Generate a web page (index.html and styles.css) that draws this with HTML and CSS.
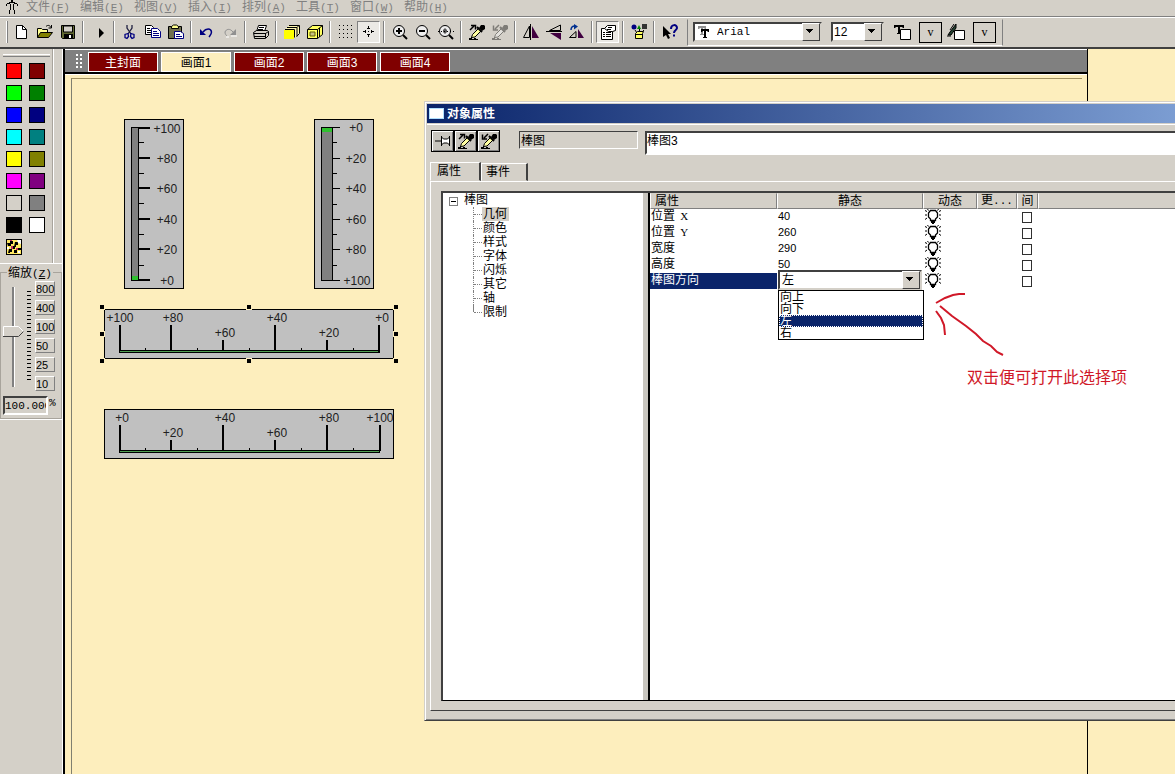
FILE: index.html
```html
<!DOCTYPE html>
<html lang="zh-CN">
<head>
  <meta charset="UTF-8">
  <meta name="viewport" content="width=device-width, initial-scale=1.0">
  <title>对象属性</title>
  <link rel="stylesheet" href="styles.css">
</head>
<body>
  <svg class="defs" aria-hidden="true">
    <symbol id="bulb" viewBox="0 0 16 16">
      <path d="M5.500 11.500v-1.500l-2-2v-4l2-2.500h5l2 2.500v4l-2 2v1.500z" fill="#fff" stroke="#000" stroke-width="1.300"/>
      <path d="M6 12h4v2h-1v1h-2v-1h-1z" fill="#000"/>
      <path d="M0 1.500l2 1M0 6h2M0 10.500l2-1.500M16 1.500l-2 1M16 6h-2M16 10.500l-2-1.500M2.500 0l1 1.500M13.500 0l-1 1.500" stroke="#000"/>
    </symbol>
    <symbol id="dropper" viewBox="0 0 16 16">
      <path d="M2.500 13.500l1-3 6-6 2.500 2.500-6 6z" fill="#ffffa0" stroke="#000"/>
      <path d="M8 3l5 5" stroke="#000" stroke-width="2"/>
      <path d="M10 4l2-3h3l1 1v3l-3 2z" fill="#000"/>
      <path d="M0 14h2v-1h1v2h2v-1h2v1h2v1h-9z" fill="#000"/>
    </symbol>
    <symbol id="get" viewBox="0 0 16 16">
      <use href="#dropper"/>
      <path d="M1 6l4-4M2 1.500h4.500v4" fill="none" stroke="#000" stroke-width="1.500"/>
    </symbol>
    <symbol id="put" viewBox="0 0 16 16">
      <use href="#dropper"/>
      <path d="M7 1l-4 4M1.500 1.500v4.500h4.500" fill="none" stroke="#000" stroke-width="1.500"/>
    </symbol>
  </svg>

  <nav class="menubar">
    <svg class="app-icon" viewBox="0 0 14 14"><path d="M6 0h2v2h-2zM4 2h6v1h-6zM2 3h3v1h-3zM9 3h3v1h-3zM1 4h1v2h-1zM12 4h1v2h-1zM5 4h1v6h-1zM8 4h1v6h-1zM4 10h1v4h-1zM9 10h1v4h-1z"/></svg>
    <a href="#">文件<span class="key">(<u>F</u>)</span></a>
    <a href="#">编辑<span class="key">(<u>E</u>)</span></a>
    <a href="#">视图<span class="key">(<u>V</u>)</span></a>
    <a href="#">插入<span class="key">(<u>I</u>)</span></a>
    <a href="#">排列<span class="key">(<u>A</u>)</span></a>
    <a href="#">工具<span class="key">(<u>T</u>)</span></a>
    <a href="#">窗口<span class="key">(<u>W</u>)</span></a>
    <a href="#">帮助<span class="key">(<u>H</u>)</span></a>
  </nav>

  <div class="toolbar">
    <span class="grip"></span>
    <button class="tool" aria-label="新建"><svg viewBox="0 0 16 16"><path d="M2.500 1.500h6l4 4v9h-10z" fill="#fff" stroke="#000"/><path d="M8.500 1.500v4h4" fill="none" stroke="#000"/></svg></button>
    <button class="tool" aria-label="打开"><svg viewBox="0 0 16 16"><path d="M.5 13.500v-9h4l1 1h5v3" fill="#ffff90" stroke="#000"/><path d="M.5 13.500l3-5h12l-4 5z" fill="#808000" stroke="#000"/><path d="M9 2.500c2-2 4-1 5 1M14.500 1v3h-3" fill="none" stroke="#000"/></svg></button>
    <button class="tool" aria-label="保存"><svg viewBox="0 0 16 16"><path d="M1.500 1.500h13v13h-12l-1-1z" fill="#606830" stroke="#000"/><path d="M3.500 2h9v6h-9z" fill="#d4d0c8" stroke="#000"/><path d="M4 10h9v5h-9z" fill="#000"/><path d="M9 11h2v3h-2z" fill="#fff"/></svg></button>
    <span class="sep"></span>
    <button class="tool" aria-label="运行"><svg viewBox="0 0 16 16"><path d="M8 4v10l5-5z"/></svg></button>
    <span class="sep"></span>
    <button class="tool" aria-label="剪切"><svg viewBox="0 0 16 16"><path d="M5 1v3l4 6M10 1v3l-4 6" fill="none" stroke="#202040" stroke-width="1.300"/><path d="M6 9.500l-3 1v3l2 1 1.500-2zM9 9.500l3 1v3l-2 1-1.500-2z" fill="none" stroke="#000080" stroke-width="1.300"/></svg></button>
    <button class="tool" aria-label="复制"><svg viewBox="0 0 16 16"><path d="M.5 1.500h6l2 2v7h-8z" fill="#fff" stroke="#000"/><path d="M2 4.500h3M2 6.500h4M2 8.500h4" stroke="#000"/><path d="M6.500 4.500h6l3 3v6h-9z" fill="#fff" stroke="#000080"/><path d="M8 7.500h4M8 9.500h6M8 11.500h6" stroke="#000080"/></svg></button>
    <button class="tool" aria-label="粘贴"><svg viewBox="0 0 16 16"><path d="M.5 2.500h13v12h-13z" fill="#707050" stroke="#000"/><path d="M3.500 4.500v-2l2-1.500h3l2 1.500v2z" fill="#ffff90" stroke="#000"/><path d="M6.500 7.500h6l3 2v5h-9z" fill="#fff" stroke="#000080"/><path d="M8 10.500h4M8 12.500h6" stroke="#000080"/></svg></button>
    <span class="sep"></span>
    <button class="tool" aria-label="撤消"><svg viewBox="0 0 16 16"><path d="M1 5v6h6z" fill="#000080"/><path d="M4 8c3-4 8-4 8.500 0 0 2-1 3-2.500 5" fill="none" stroke="#000080" stroke-width="1.500"/></svg></button>
    <button class="tool" aria-label="重做"><svg viewBox="0 0 16 16"><path d="M14 5v6h-6z" fill="#909090"/><path d="M11 8c-3-4-7-3-8 0 0 2 1 3 2 4" fill="none" stroke="#909090"/><path d="M9 12h6M4 13h3" stroke="#fff"/></svg></button>
    <span class="sep"></span>
    <button class="tool" aria-label="打印"><svg viewBox="0 0 16 16"><path d="M5.500 1.500h8l-2 6h-8z" fill="#fff" stroke="#000"/><path d="M6 3.500h5M5 5.500h5" stroke="#000"/><path d="M.5 8.500l3-2h11l1 1v4l-3 3h-11z" fill="#d4d0c8" stroke="#000"/><path d="M1 9.500h11M1 12.500h11M12.500 9v5M12.500 9.500l3-2" stroke="#000"/></svg></button>
    <span class="sep"></span>
    <button class="tool" aria-label="置于最前"><svg viewBox="0 0 16 16"><path d="M5 1.500h10.500v8l-3.500 4-11-8z" fill="#fff8b0"/><path d="M5 1.500h10.500v8l-3 3M3 3.500h10v9M13 3.500l2-2M1 5.500h9.500v8" fill="none" stroke="#000"/><path d="M0 6h10v9h-10z" fill="#ff0"/></svg></button>
    <button class="tool" aria-label="置于最后"><svg viewBox="0 0 16 16"><path d="M.5 5.500l5-4h10v9l-5 4h-10z" fill="#ffff60" stroke="#000"/><path d="M.5 5.500h10v9M10.500 5.500l5-4M12.500 4v9" fill="none" stroke="#000"/><path d="M3 8h5v4h-5z" fill="#c8c080" stroke="#606000"/></svg></button>
    <span class="sep"></span>
    <button class="tool" aria-label="网格"><svg viewBox="0 0 16 16"><path d="M1 1.500h15M1 5.500h15M1 9.500h15M1 13.500h15" stroke="#000" stroke-dasharray="1 3"/></svg></button>
    <button class="tool pressed" aria-label="对齐网格"><svg viewBox="0 0 16 16"><path d="M7.500 2v3M7.500 10v3M2 7.500h3M10 7.500h3" stroke="#000"/><path d="M7 7h1v1h-1zM6 4h3v1h-3zM6 10h3v1h-3zM4 6h1v3h-1zM10 6h1v3h-1z"/></svg></button>
    <span class="sep"></span>
    <button class="tool" aria-label="放大"><svg viewBox="0 0 16 16"><circle cx="7" cy="7" r="5.500" fill="#eee" stroke="#000"/><path d="M4 7h6M7 4v6" stroke="#000" stroke-width="2"/><path d="M11 11l4 4" stroke="#000" stroke-width="2"/></svg></button>
    <button class="tool" aria-label="缩小"><svg viewBox="0 0 16 16"><circle cx="7" cy="7" r="5.500" fill="#eee" stroke="#000"/><path d="M4 7h6" stroke="#000" stroke-width="2"/><path d="M11 11l4 4" stroke="#000" stroke-width="2"/></svg></button>
    <button class="tool" aria-label="缩放区域"><svg viewBox="0 0 16 16"><circle cx="7" cy="7" r="5.500" fill="#eee" stroke="#000"/><path d="M5 6l2-2 2 2v2l-2 2-2-2z" fill="#555"/><path d="M0 7.500h16" stroke="#000" stroke-dasharray="1 2"/><path d="M11 11l4 4" stroke="#000" stroke-width="2"/></svg></button>
    <span class="sep"></span>
    <button class="tool" aria-label="复制属性"><svg viewBox="0 0 16 16"><use href="#get"/></svg></button>
    <button class="tool disabled" aria-label="分配属性"><svg viewBox="0 0 16 16"><use href="#put"/></svg></button>
    <span class="sep"></span>
    <button class="tool" aria-label="水平镜像"><svg viewBox="0 0 16 16"><path d="M6.500 2v11.500h-6z" fill="#d4d0c8" stroke="#000"/><path d="M9 2v12h7z" fill="#400040"/><path d="M7.500 0v16" stroke="#000"/></svg></button>
    <button class="tool" aria-label="垂直镜像"><svg viewBox="0 0 16 16"><path d="M14.500 1v5.500h-11z" fill="#d4d0c8" stroke="#000"/><path d="M15 9v7l-11-7z" fill="#400040"/><path d="M0 7.500h16" stroke="#000"/></svg></button>
    <button class="tool" aria-label="旋转"><svg viewBox="0 0 16 16"><path d="M7 7.500v6h-6.500z" fill="#d4d0c8" stroke="#000"/><path d="M9 5v9h6z" fill="#400040"/><path d="M2 6c0-3 2-4 4-4" fill="none" stroke="#003090" stroke-width="1.500"/><path d="M5 0l4 2.500-4 3z" fill="#003090"/></svg></button>
    <span class="sep"></span>
    <button class="tool pressed" aria-label="属性"><svg viewBox="0 0 16 16"><path d="M1.500 4.500h11v11h-11z" fill="#fff" stroke="#000"/><path d="M3 8.500h2M6 8.500h5M3 10.500h2M6 10.500h5M3 12.500h2M6 12.500h5" stroke="#000"/><path d="M4.500 4.500l3-3h8v5l-3 1h-4z" fill="#fff" stroke="#000"/><path d="M8 3.500h4M7 5.500h4" stroke="#000"/></svg></button>
    <span class="sep"></span>
    <button class="tool" aria-label="库"><svg viewBox="0 0 16 16"><circle cx="3" cy="3" r="2.500" fill="#000080"/><path d="M6 5l2-4 2 4z" fill="#080"/><path d="M11 0h5v5h-5z" fill="#333"/><path d="M4 6l2 3M8.500 5v2M13 6l-2 2" stroke="#000"/><path d="M4.500 9.500l2-2h6l-1 2v5h-7z" fill="#ffff60" stroke="#000"/><path d="M5 10.500h6" stroke="#000"/></svg></button>
    <span class="sep"></span>
    <button class="tool" aria-label="帮助"><svg viewBox="0 0 16 16"><path d="M1 2v11l3-2 2 4 2-1-2-4h3z"/><path d="M9 5c0-5 6-5 6-1 0 2-3 2-3 5M12 10.500v2" fill="none" stroke="#000080" stroke-width="2"/></svg></button>

    <div class="fontbar">
      <label class="combo font-name">
        <svg viewBox="0 0 16 16"><path d="M1 2h8v3h-1l-1-1h-1v6h1v1h-4v-1h1v-6h-1l-1 1h-1z" fill="#909090"/><path d="M4 5h8v3h-1l-1-1h-1v6h1v1h-4v-1h1v-6h-1l-1 1h-1z" fill="#000"/></svg>
        <select aria-label="字体"><option>Arial</option></select>
      </label>
      <label class="combo font-size">
        <select aria-label="字号"><option>12</option></select>
      </label>
      <button class="tool color" aria-label="字体颜色"><svg viewBox="0 0 18 16"><path d="M1 1h10v3h-1l-1-1h-2v6h1v1h-4v-1h1v-6h-2l-1 1h-1z" fill="#000"/><path d="M7.500 5.500h10v10h-10z" fill="#fff" stroke="#000"/></svg></button>
      <button class="drop">v</button>
      <button class="tool color" aria-label="线颜色"><svg viewBox="0 0 18 16"><path d="M9 0l-6 8-2 3h3l5-7zM7 0l-4 6" fill="#204030" stroke="#000"/><path d="M0 12h4" stroke="#000"/><path d="M7.500 6.500h10v9h-10z" fill="#fff" stroke="#000"/></svg></button>
      <button class="drop">v</button>
    </div>
  </div>

  <div class="body">
    <aside class="side">
      <div class="palette">
        <span class="palette-grip"></span>
        <div class="swatches">
          <button class="swatch red" aria-label="红"></button><button class="swatch maroon" aria-label="深红"></button>
          <button class="swatch lime" aria-label="绿"></button><button class="swatch green" aria-label="深绿"></button>
          <button class="swatch blue" aria-label="蓝"></button><button class="swatch navy" aria-label="深蓝"></button>
          <button class="swatch cyan" aria-label="青"></button><button class="swatch teal" aria-label="深青"></button>
          <button class="swatch yellow" aria-label="黄"></button><button class="swatch olive" aria-label="深黄"></button>
          <button class="swatch magenta" aria-label="紫"></button><button class="swatch purple" aria-label="深紫"></button>
          <button class="swatch silver" aria-label="浅灰"></button><button class="swatch gray" aria-label="灰"></button>
          <button class="swatch black" aria-label="黑"></button><button class="swatch white" aria-label="白"></button>
          <button class="swatch more" aria-label="更多颜色"><svg viewBox="0 0 14 14"><path d="M0 0h14v14h-14z" fill="#ffe860"/><path d="M0 3h3v-2h3v3h-2v2h-3zM8 2h3v3h-2v2h-2zM2 9h3v3h-2v1h-2zM6 6h2v3h-2zM7 10h3v3h-3zM11 8h3v2h-3z" fill="#000"/><path d="M4 6h2v3h-2zM9 8h2v2h-2zM3 0h2v1h-2z" fill="#c03060"/><path d="M10 0l4 0v4l-3-1zM0 7h2v2h-2zM11 11h2v2h-2z" fill="#fff"/></svg></button>
        </div>
      </div>
      <fieldset class="zoom">
        <legend>缩放<span class="key">(<u>Z</u>)</span></legend>
        <div class="zoom-row">
          <input class="zoom-slider" type="range" min="0" max="100" value="56" aria-label="缩放">
          <span class="ticks"></span>
          <div class="zoom-steps">
            <button>800</button>
            <button>400</button>
            <button>100</button>
            <button>50</button>
            <button>25</button>
            <button>10</button>
          </div>
        </div>
        <label class="zoom-value"><input type="text" value="100.000">%</label>
      </fieldset>
    </aside>

    <main class="workspace">
      <div class="page">
        <div class="tabstrip">
          <span class="dots"></span>
          <button class="screen">主封面</button>
          <button class="screen active">画面1</button>
          <button class="screen">画面2</button>
          <button class="screen">画面3</button>
          <button class="screen">画面4</button>
        </div>
        <div class="sheet"></div>
      </div>

      <svg class="gauge bar-up" viewBox="0 0 60 170">
        <rect class="face" x=".5" y=".5" width="59" height="169"/>
        <rect class="tube" x="7.500" y="8.500" width="7" height="153"/>
        <rect class="level" x="8" y="157" width="6" height="4"/>
        <path class="major" d="M15 9h11M15 39h11M15 69h11M15 100h11M15 130h11M15 161h11"/>
        <path class="minor" d="M15 23.500h5M15 54.500h5M15 84.500h5M15 115.500h5M15 146.500h5"/>
        <text x="43" y="14">+100</text>
        <text x="43" y="44">+80</text>
        <text x="43" y="74">+60</text>
        <text x="43" y="105">+40</text>
        <text x="43" y="135">+20</text>
        <text x="43" y="166">+0</text>
      </svg>

      <svg class="gauge bar-down" viewBox="0 0 60 170">
        <rect class="face" x=".5" y=".5" width="59" height="169"/>
        <rect class="tube" x="7.500" y="8.500" width="11" height="153"/>
        <rect class="level" x="8" y="9" width="10" height="4"/>
        <path class="minor" d="M18 8.500h8M18 39.500h8M18 69.500h8M18 100.500h8M18 130.500h8M18 161.500h8"/>
        <path class="minor" d="M19 23.500h4M19 54.500h4M19 85.500h4M19 115.500h4M19 146.500h4"/>
        <text x="42" y="13">+0</text>
        <text x="42" y="44">+20</text>
        <text x="42" y="74">+40</text>
        <text x="42" y="105">+60</text>
        <text x="42" y="135">+80</text>
        <text x="43" y="166">+100</text>
      </svg>

      <svg class="gauge bar-left" viewBox="-4 -4 298 58">
        <rect class="face" x=".5" y=".5" width="289" height="49"/>
        <rect class="thin" x="15.500" y="41.500" width="259" height="2"/>
        <path class="major" d="M16 16v26M67 16v26M119 31v11M171 16v26M223 31v11M275 16v28"/>
        <path class="minor" d="M41.500 39v3M93.500 39v3M145.500 39v3M197.500 39v3M249.500 39v3"/>
        <text x="16" y="13">+100</text>
        <text x="69" y="13">+80</text>
        <text x="121" y="28">+60</text>
        <text x="173" y="13">+40</text>
        <text x="225" y="28">+20</text>
        <text x="278" y="13">+0</text>
        <g class="handles">
          <rect x="-4.500" y="-4.500" width="5" height="5"/><rect x="142.500" y="-4.500" width="5" height="5"/><rect x="289.500" y="-4.500" width="5" height="5"/>
          <rect x="-4.500" y="22.500" width="5" height="5"/><rect x="289.500" y="22.500" width="5" height="5"/>
          <rect x="-4.500" y="49.500" width="5" height="5"/><rect x="142.500" y="49.500" width="5" height="5"/><rect x="289.500" y="49.500" width="5" height="5"/>
        </g>
      </svg>

      <svg class="gauge bar-right" viewBox="0 0 290 50">
        <rect class="face" x=".5" y=".5" width="289" height="49"/>
        <rect class="thin" x="15.500" y="41.500" width="260" height="2"/>
        <path class="major" d="M16 16v26M67 31v11M119 16v26M171 31v11M223 16v26M276 16v26"/>
        <path class="minor" d="M41.500 39v3M93.500 39v3M145.500 39v3M197.500 39v3M249.500 39v3"/>
        <text x="18" y="13">+0</text>
        <text x="69" y="28">+20</text>
        <text x="121" y="13">+40</text>
        <text x="173" y="28">+60</text>
        <text x="225" y="13">+80</text>
        <text x="276" y="13">+100</text>
      </svg>

      <section class="dialog">
        <h1 class="titlebar"><span class="title-icon"></span>对象属性</h1>
        <div class="dialog-tools">
          <div class="tool-group">
            <button aria-label="固定"><svg viewBox="0 0 16 16"><path d="M0 8h6M6.500 3v10M14.500 3v10" stroke="#000"/><path d="M6.500 4l2 2h4l2-2v8l-2-2h-4l-2 2z" fill="#fff" stroke="#000"/></svg></button>
            <button aria-label="复制属性"><svg viewBox="0 0 16 16"><use href="#get"/></svg></button>
            <button aria-label="分配属性"><svg viewBox="0 0 16 16"><use href="#put"/></svg></button>
          </div>
          <input class="kind" type="text" value="棒图" readonly aria-label="类型">
          <input class="name" type="text" value="棒图3" aria-label="名称">
        </div>
        <div class="tabs">
          <button class="tab active">属性</button>
          <button class="tab">事件</button>
        </div>
        <div class="tab-page">
          <div class="panes">
            <div class="tree">
              <div class="root"><button class="toggle" aria-label="折叠"></button>棒图</div>
              <ul>
                <li><span class="selected">几何</span></li>
                <li><span>颜色</span></li>
                <li><span>样式</span></li>
                <li><span>字体</span></li>
                <li><span>闪烁</span></li>
                <li><span>其它</span></li>
                <li><span>轴</span></li>
                <li><span>限制</span></li>
              </ul>
            </div>
            <div class="props">
              <table>
                <colgroup><col class="c-name"><col class="c-static"><col class="c-dyn"><col class="c-upd"><col class="c-ind"><col></colgroup>
                <thead>
                  <tr><th>属性</th><th>静态</th><th>动态</th><th>更<span class="key">...</span></th><th>间</th><th></th></tr>
                </thead>
                <tbody>
                  <tr><td>位置 <span class="axis">X</span></td><td>40</td><td><svg class="bulb"><use href="#bulb"/></svg></td><td></td><td><input type="checkbox" aria-label="位置 X"></td><td></td></tr>
                  <tr><td>位置 <span class="axis">Y</span></td><td>260</td><td><svg class="bulb"><use href="#bulb"/></svg></td><td></td><td><input type="checkbox" aria-label="位置 Y"></td><td></td></tr>
                  <tr><td>宽度</td><td>290</td><td><svg class="bulb"><use href="#bulb"/></svg></td><td></td><td><input type="checkbox" aria-label="宽度"></td><td></td></tr>
                  <tr><td>高度</td><td>50</td><td><svg class="bulb"><use href="#bulb"/></svg></td><td></td><td><input type="checkbox" aria-label="高度"></td><td></td></tr>
                  <tr class="current">
                    <td><label for="direction">棒图方向</label></td>
                    <td>
                      <div class="editor">
                        <div class="combo">
                          <select id="direction"><option>向上</option><option>向下</option><option selected>左</option><option>右</option></select>
                        </div>
                        <ul class="options" role="listbox">
                          <li role="option">向上</li>
                          <li role="option">向下</li>
                          <li role="option" aria-selected="true">左</li>
                          <li role="option">右</li>
                        </ul>
                      </div>
                    </td>
                    <td><svg class="bulb"><use href="#bulb"/></svg></td><td></td><td><input type="checkbox" aria-label="棒图方向"></td><td></td>
                  </tr>
                </tbody>
              </table>
            </div>
          </div>
        </div>
      </section>

      <div class="note">
        <svg viewBox="0 0 80 70"><path d="M6 11l9-5 8-3 6-1 6 0M10 14l12 10 14 10 10 8 7 7 8 5 6 6 6 3M6 19l5 7 3 7 1 10"/></svg>
        <p>双击便可打开此选择项</p>
      </div>
    </main>
  </div>
</body>
</html>
```
FILE: styles.css
```css
:root {
  --face: #d4d0c8;
  --light: #fff;
  --shadow: #808080;
  --dark: #404040;
  --paper: #fdeebd;
  --navy: #0a246a;
  --maroon: #800000;
}
* {
  box-sizing: border-box;
}
html, body {
  height: 100%;
  margin: 0;
}
body {
  display: flex;
  flex-direction: column;
  overflow: hidden;
  background: var(--face);
  color: #000;
  font-family: "Liberation Sans", "Noto Sans CJK SC", sans-serif;
  font-size: 12px;
  line-height: 14px;
}
button, input, select {
  margin: 0;
  padding: 0;
  border: 0;
  border-radius: 0;
  color: inherit;
  font: inherit;
}
svg {
  display: block;
}
.defs {
  position: absolute;
  width: 0;
  height: 0;
}
.key {
  font-family: "Liberation Mono", monospace;
  font-size: 11px;
}

/* Menu bar */
.menubar {
  display: flex;
  flex: none;
  height: 17px;
  padding-left: 5px;
  border-bottom: 1px solid var(--shadow);
}
.menubar a {
  width: 54px;
  color: var(--shadow);
  text-decoration: none;
  line-height: 15px;
  white-space: nowrap;
}
.app-icon {
  width: 14px;
  height: 14px;
  margin-right: 7px;
}

/* Toolbar */
.toolbar {
  display: flex;
  align-items: center;
  height: 32px;
  flex: none;
  padding: 0 0 1px 6px;
  border-top: 1px solid var(--light);
  border-bottom: 2px solid var(--dark);
}
.grip {
  width: 2px;
  height: 22px;
  margin-right: 2px;
  border-left: 1px solid var(--light);
  border-right: 1px solid var(--shadow);
}
.tool {
  display: flex;
  align-items: center;
  justify-content: center;
  flex: none;
  width: 23px;
  height: 22px;
  background: none;
}
.tool svg {
  width: 16px;
  height: 16px;
}
.tool.pressed {
  background: #ebe9e5;
  border: 1px solid;
  border-color: var(--shadow) var(--light) var(--light) var(--shadow);
}
.tool.disabled svg {
  filter: grayscale(1);
  opacity: 0.4;
}
.sep {
  flex: none;
  width: 2px;
  height: 22px;
  margin: 0 3px;
  border-left: 1px solid var(--shadow);
  border-right: 1px solid var(--light);
}
.fontbar {
  display: flex;
  align-items: center;
  flex: none;
  height: 27px;
  margin-left: 6px;
  padding: 0 6px 0 5px;
  border: 1px solid;
  border-color: var(--face) var(--shadow) var(--light) var(--shadow);
}
.combo {
  position: relative;
  display: flex;
  align-items: center;
  height: 20px;
  background: #fff;
  border: 2px solid;
  border-color: var(--dark) var(--face) var(--face) var(--dark);
}
.combo select {
  flex: 1;
  min-width: 0;
  height: 100%;
  padding-left: 2px;
  appearance: none;
  background: none;
  outline: 0;
}
.combo::after {
  content: '';
  width: 16px;
  height: 16px;
  flex: none;
  background: linear-gradient(#000, #000) 3px 5px / 7px 1px no-repeat,
    linear-gradient(#000, #000) 4px 6px / 5px 1px no-repeat,
    linear-gradient(#000, #000) 5px 7px / 3px 1px no-repeat,
    linear-gradient(#000, #000) 6px 8px / 1px 1px no-repeat,
    var(--face);
  border: 1px solid;
  border-color: var(--light) var(--dark) var(--dark) var(--light);
  pointer-events: none;
}
.font-name {
  width: 129px;
  margin-right: 9px;
}
.font-name svg {
  width: 16px;
  height: 16px;
  margin: 0 2px;
}
.font-name select {
  font-family: "Liberation Mono", monospace;
  font-size: 11px;
}
.font-size {
  width: 53px;
  margin-right: 6px;
}
.font-size select {
  padding-left: 1px;
}
.tool.color svg {
  width: 18px;
}
.drop {
  width: 23px;
  height: 21px;
  margin-left: 6px;
  border: 1px solid #000;
  background: var(--face);
  font-family: "Liberation Serif", serif;
}
.drop + .tool {
  margin-left: 2px;
}

/* Left dock */
.body {
  display: flex;
  flex: 1;
  min-height: 0;
}
.side {
  flex: none;
  width: 63px;
  border-right: 1px solid var(--light);
}
.palette {
  width: 54px;
  height: 215px;
  padding: 5px 6px 0;
  border-right: 1px solid var(--light);
  box-shadow: inset -1px 0 0 #a8a49c;
}
.palette-grip {
  display: block;
  height: 3px;
  margin: 0 -3px 6px;
  border-top: 1px solid var(--light);
  border-bottom: 1px solid var(--shadow);
}
.swatches {
  display: grid;
  grid-template-columns: 16px 16px;
  gap: 6px 7px;
}
.swatch {
  height: 16px;
  border: 1px solid #000;
}
.red { background: #f00; }
.maroon { background: #800000; }
.lime { background: #0f0; }
.green { background: #008000; }
.blue { background: #00f; }
.navy { background: #000080; }
.cyan { background: #0ff; }
.teal { background: #008080; }
.yellow { background: #ff0; }
.olive { background: #808000; }
.magenta { background: #f0f; }
.purple { background: #800080; }
.silver { background: var(--face); }
.gray { background: #808080; }
.black { background: #000; }
.white { background: #fff; }
.zoom {
  min-width: 0;
  margin: 0;
  padding: 1px 2px 3px 1px;
  border: 1px solid #a8a49c;
  outline: 1px solid var(--light);
}
.zoom legend {
  height: 16px;
  margin-left: 5px;
  padding: 0 1px;
  line-height: 18px;
  white-space: nowrap;
  background: var(--face);
}
.zoom-row {
  display: flex;
}
.zoom-slider {
  appearance: none;
  width: 23px;
  height: 100px;
  margin-top: 6px;
  writing-mode: vertical-lr;
  direction: rtl;
  background: linear-gradient(90deg, var(--shadow) 2px, var(--light) 2px) 10px 0 / 3px 100% no-repeat;
}
.zoom-slider::-webkit-slider-thumb {
  appearance: none;
  width: 21px;
  height: 11px;
  background: url("data:image/svg+xml,%3Csvg xmlns='http://www.w3.org/2000/svg' viewBox='0 0 21 11'%3E%3Cpath d='M.5 .5h15l5 5-5 5h-15z' fill='%23d4d0c8' stroke='%23fff'/%3E%3Cpath d='M0 10.500h15.500l5-5' fill='none' stroke='%23404040'/%3E%3C/svg%3E");
}
.ticks {
  width: 4px;
  height: 92px;
  margin: 10px 4px 0 2px;
  background: repeating-linear-gradient(#000 0 1px, transparent 1px 4px);
}
.zoom-steps {
  display: flex;
  flex-direction: column;
  gap: 4px;
}
.zoom-steps button {
  width: 20px;
  height: 15px;
  border: 1px solid;
  border-color: var(--light) var(--shadow) var(--shadow) var(--light);
  background: var(--face);
  font-size: 11px;
  line-height: 12px;
  text-align: left;
}
.zoom-value {
  display: flex;
  gap: 1px;
  margin-top: 5px;
  font-family: "Liberation Mono", monospace;
  font-size: 11px;
}
.zoom-value input {
  width: 45px;
  height: 19px;
  margin-left: 1px;
  border: 2px solid;
  border-color: var(--dark) var(--light) var(--light) var(--dark);
  background: var(--face);
}

/* Drawing area */
.workspace {
  position: relative;
  flex: 1;
  min-width: 0;
  border-left: 2px solid #000;
  background: var(--paper);
  overflow: hidden;
}
.page {
  display: flex;
  flex-direction: column;
  height: 100%;
  margin-right: 87px;
  border-right: 1px solid #000;
}
.tabstrip {
  display: flex;
  align-items: flex-end;
  gap: 3px;
  height: 25px;
  padding-left: 10px;
  border-top: 1px solid var(--light);
  border-bottom: 2px solid #000;
  background: #808080;
  box-shadow: 0 1px 0 var(--light);
}
.dots {
  width: 10px;
  height: 16px;
  margin-bottom: 3px;
  background: radial-gradient(circle, #fff 1px, transparent 1px) 0 0 / 4px 4px;
  clip-path: inset(0 2px 0 0);
}
.screen {
  width: 70px;
  height: 20px;
  padding-top: 2px;
  border: 1px solid var(--light);
  background: var(--maroon);
  color: #fff;
}
.screen.active {
  background: var(--paper);
  color: #000;
}
.sheet {
  flex: 1;
  margin: 4px 5px 0 6px;
  border-top: 1px solid #a09060;
  border-left: 1px solid #808070;
}

/* Bar graphs placed on the page */
.gauge {
  position: absolute;
  overflow: visible;
  shape-rendering: crispEdges;
}
.gauge text {
  font-size: 12px;
  fill: #202020;
  text-anchor: middle;
}
.bar-up { left: 59px; top: 70px; width: 60px; height: 170px; }
.bar-down { left: 249px; top: 70px; width: 60px; height: 170px; }
.bar-left { left: 35px; top: 256px; width: 298px; height: 58px; }
.bar-right { left: 39px; top: 360px; width: 290px; height: 50px; }
.face { fill: #c0c0c0; stroke: #000; }
.tube { fill: #808080; stroke: #000; }
.level { fill: #30c030; }
.thin { fill: #50a050; stroke: #000; }
.major { stroke: #000; stroke-width: 2; }
.minor { stroke: #000; stroke-width: 1; }
.handles rect { fill: #000; stroke: var(--paper); }

/* Object properties window */
.dialog {
  position: absolute;
  top: 52px;
  right: -60px;
  bottom: 53px;
  left: 359px;
  display: flex;
  flex-direction: column;
  padding: 2px;
  border: 1px solid;
  border-color: var(--face) var(--dark) var(--dark) var(--face);
  background: var(--face);
  box-shadow: inset 1px 1px 0 var(--light), inset 0 -1px 0 var(--shadow);
}
.titlebar {
  display: flex;
  align-items: center;
  gap: 3px;
  height: 19px;
  margin: 0;
  padding-left: 2px;
  background: linear-gradient(90deg, var(--navy), #84a6da);
  color: #fff;
  font-size: 12px;
}
.title-icon {
  width: 15px;
  height: 11px;
  border: 1px solid #b0e0ff;
  background: #fff;
}
.dialog-tools {
  display: flex;
  align-items: flex-start;
  margin-top: 1px;
  padding: 5px 0 0 4px;
  border-top: 1px solid var(--light);
}
.tool-group {
  display: flex;
  margin-right: 19px;
}
.tool-group button {
  display: flex;
  align-items: center;
  justify-content: center;
  width: 23px;
  height: 22px;
  border: 1px solid #000;
  background: #c8c5be;
  box-shadow: inset 1px 1px 0 var(--light), inset -1px -1px 0 var(--shadow);
}
.tool-group svg {
  width: 16px;
  height: 16px;
}
.kind, .name {
  margin-top: 1px;
  border: 1px solid;
  border-color: var(--dark) var(--light) var(--light) var(--dark);
}
.kind {
  width: 119px;
  height: 18px;
  margin-right: 7px;
  padding: 0 0 2px 1px;
  background: var(--face);
}
.name {
  flex: 1;
  height: 24px;
  padding: 0 0 7px 0;
  border-width: 2px;
  background: #fff;
}
.tabs {
  display: flex;
  align-items: flex-end;
  margin-top: 7px;
  padding-left: 3px;
}
.tab {
  width: 47px;
  height: 18px;
  padding-left: 4px;
  border: 1px solid;
  border-color: var(--light) var(--dark) transparent var(--light);
  border-right-width: 2px;
  background: var(--face);
  text-align: left;
}
.tab.active {
  width: 51px;
  height: 19px;
  padding: 0 0 2px 6px;
}
.tab-page {
  display: flex;
  flex: 1;
  min-height: 0;
  margin: 0 3px 7px;
  padding: 9px 10px;
  border: 1px solid;
  border-color: var(--light) var(--dark) var(--dark) var(--light);
}
.panes {
  display: flex;
  flex: 1;
  min-width: 0;
  border: 2px solid;
  border-color: var(--dark) #000 #000 var(--dark);
  border-bottom-width: 1px;
  background: #fff;
}
.tree {
  flex: none;
  width: 205px;
  padding-left: 6px;
  border-right: 5px solid #c8c5be;
}
.root {
  display: flex;
  align-items: center;
  gap: 6px;
}
.toggle {
  width: 9px;
  height: 9px;
  margin-top: 2px;
  border: 1px solid var(--shadow);
  background: linear-gradient(#000, #000) 1px 3px / 5px 1px no-repeat #fff;
}
.tree ul {
  margin: 0 0 0 24px;
  padding: 0;
  list-style: none;
}
.tree li {
  display: flex;
  align-items: center;
  height: 14px;
  border-left: 1px dotted var(--shadow);
}
.tree li:last-child {
  border-image: linear-gradient(var(--shadow) 50%, transparent 50%) 1;
}
.tree li::before {
  content: '';
  width: 8px;
  border-top: 1px dotted var(--shadow);
}
.tree span {
  padding: 0 2px 0 1px;
}
.tree .selected {
  background: var(--face);
}
.props {
  flex: 1;
  min-width: 0;
  border-left: 2px solid #000;
}
.props table {
  width: 100%;
  table-layout: fixed;
  border-collapse: separate;
  border-spacing: 0;
}
.c-name { width: 127px; }
.c-static { width: 146px; }
.c-dyn { width: 54px; }
.c-upd { width: 40px; }
.c-ind { width: 21px; }
.props th {
  height: 15px;
  padding: 0;
  border: 1px solid;
  border-color: var(--face) var(--shadow) var(--shadow) var(--light);
  background: var(--face);
  font-weight: 400;
  line-height: 13px;
}
.props th:first-child {
  padding-left: 4px;
  text-align: left;
}
.props td {
  height: 16px;
  padding: 0 1px;
  vertical-align: top;
  white-space: nowrap;
}
.props td:nth-child(2) {
  font-size: 11px;
}
.props td:nth-child(3) {
  padding-left: 2px;
}
.axis {
  margin-left: 2px;
  font-family: "Liberation Serif", serif;
  font-size: 11px;
}
.bulb {
  width: 16px;
  height: 16px;
}
.props input {
  display: block;
  appearance: none;
  width: 10px;
  height: 11px;
  margin: 3px 0 0 4px;
  border: 1px solid #303030;
  background: #fff;
}
.current td:first-child {
  background: var(--navy);
  color: #fff;
}
.current td:nth-child(2) {
  position: relative;
}
.editor {
  position: absolute;
  top: -3px;
  left: 1px;
  z-index: 1;
  width: 100%;
  font-size: 12px;
}
.editor .combo {
  width: calc(100% - 2px);
}
.options {
  margin: 0;
  padding: 0;
  border: 1px solid #000;
  background: #fff;
  list-style: none;
}
.options li {
  height: 12px;
  padding-left: 1px;
  line-height: 12px;
}
.options [aria-selected="true"] {
  background: var(--navy);
  color: #fff;
  outline: 1px dotted #fff;
  outline-offset: -1px;
}

/* Red remark over the window */
.note {
  position: absolute;
  top: 243px;
  left: 865px;
  color: #d01828;
}
.note svg {
  width: 80px;
  height: 70px;
  fill: none;
  stroke: currentColor;
  stroke-width: 2;
}
.note p {
  margin: 6px 0 0 37px;
  font-size: 16px;
  line-height: 20px;
}
```
